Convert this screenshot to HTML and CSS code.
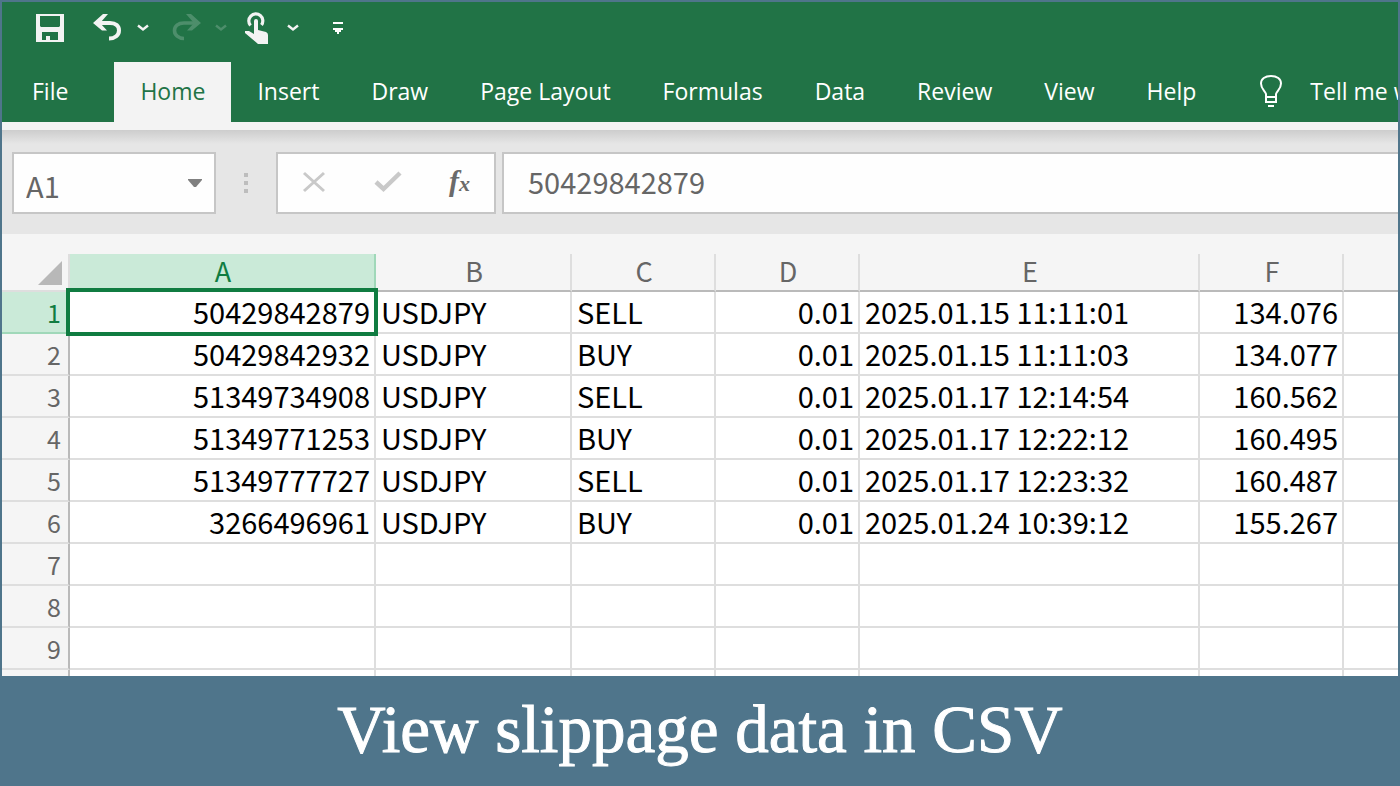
FILE: index.html
```html
<!DOCTYPE html>
<html lang="en">
<head>
<meta charset="utf-8">
<title>View slippage data in CSV</title>
<link rel="stylesheet" href="styles.css">
</head>
<body>
<main class="frame">
  <div class="app">
    <header class="titlebar">
      <div class="quick">
        <button class="tool save" aria-label="Save"><svg width="28" height="28" viewBox="0 0 28 28"><path fill="currentColor" fill-rule="evenodd" d="M0 0h28v28H0zM4 2v10l1 1h18l1-1V2zM6 18v8h4v-4h4v4h8v-8z"/></svg></button>
        <button class="tool undo" aria-label="Undo"><svg width="30" height="28" viewBox="0 0 30 28"><path fill="none" stroke="currentColor" stroke-width="4" d="M3 9h14c6 0 9 3 9 7.500s-4 8-10 8"/><path fill="currentColor" d="M0 9L10 0h5L8 8v2l6 6.500H9z"/></svg></button>
        <button class="tool more" aria-label="Undo history"><svg width="12" height="8" viewBox="0 0 12 8"><path fill="none" stroke="currentColor" stroke-width="2.400" d="M1 1.500l5 4 5-4"/></svg></button>
        <button class="tool redo" aria-label="Redo" disabled><svg width="30" height="28" viewBox="0 0 30 28"><path fill="none" stroke="currentColor" stroke-width="3.600" d="M27 9H13c-6 0-9.500 3-9.500 7.500s4 8 9.500 8"/><path fill="currentColor" d="M30 9L20 0h-5l7 8v2l-6 6.500h5z"/></svg></button>
        <button class="tool more faded" aria-label="Redo history" disabled><svg width="12" height="8" viewBox="0 0 12 8"><path fill="none" stroke="currentColor" stroke-width="2.400" d="M1 1.500l5 4 5-4"/></svg></button>
        <button class="tool touch" aria-label="Touch mode"><svg width="24" height="32" viewBox="0 0 24 32"><path fill="none" stroke="currentColor" stroke-width="3.200" d="M5.500 13.500A7 7 0 1 1 16.500 13"/><path fill="currentColor" d="M9 9q0-2 2-2t2 2v9l8 2q2 1 2 3v9H13L0 21v-2h4l5 3z"/></svg></button>
        <button class="tool more" aria-label="Touch mode options"><svg width="12" height="8" viewBox="0 0 12 8"><path fill="none" stroke="currentColor" stroke-width="2.400" d="M1 1.500l5 4 5-4"/></svg></button>
        <button class="tool customize" aria-label="Customize toolbar"><svg width="10" height="12" viewBox="0 0 10 12"><path fill="currentColor" d="M0 0h10v2H0zM0 6h10v2H8v2H6v2H4v-2H2V8H0z"/></svg></button>
      </div>
      <nav class="tabs">
        <a class="tab file" href="#">File</a>
        <a class="tab active" href="#">Home</a>
        <a class="tab" href="#">Insert</a>
        <a class="tab" href="#">Draw</a>
        <a class="tab" href="#">Page Layout</a>
        <a class="tab" href="#">Formulas</a>
        <a class="tab" href="#">Data</a>
        <a class="tab" href="#">Review</a>
        <a class="tab" href="#">View</a>
        <a class="tab" href="#">Help</a>
        <a class="tab tell" href="#"><svg width="24" height="34" viewBox="0 0 24 34"><path fill="none" stroke="currentColor" stroke-width="2" d="M7 23v-3C6 17 2 15 2 9.500 2 5 6 2 12 2s10 3 10 7.500C22 15 18 17 17 20v3M7 23v5h10v-5zM9 32h6"/></svg>Tell me what you want to do</a>
      </nav>
    </header>
    <div class="ribbon-edge"></div>
    <section class="formula-bar">
      <div class="name-box">
        <input class="name-input" aria-label="Name box" value="A1">
        <button class="name-drop" aria-label="Open name list"><svg width="14" height="8" viewBox="0 0 14 8"><path fill="currentColor" d="M0 0h14v1L8 8H6L0 1z"/></svg></button>
      </div>
      <div class="grip"><i></i><i></i><i></i></div>
      <div class="actions">
        <button class="action" aria-label="Cancel"><svg width="24" height="22" viewBox="0 0 24 22"><path fill="none" stroke="currentColor" stroke-width="3" d="M2 2l20 18M22 2L2 20"/></svg></button>
        <button class="action" aria-label="Enter"><svg width="28" height="22" viewBox="0 0 28 22"><path fill="none" stroke="currentColor" stroke-width="4.500" d="M2 11l7.500 7L26 2"/></svg></button>
        <button class="action fx" aria-label="Insert function">f<small>x</small></button>
      </div>
      <input class="formula-input" aria-label="Formula" value="50429842879">
    </section>
    <section class="sheet">
      <table class="grid">
        <colgroup><col class="c-num"><col class="c-a"><col class="c-b"><col class="c-c"><col class="c-c"><col class="c-e"><col class="c-c"><col></colgroup>
        <thead>
          <tr><th class="corner"><svg width="24" height="24" viewBox="0 0 24 24"><path fill="#b8b8b8" d="M24 0v24H0z"/></svg></th><th class="picked">A</th><th>B</th><th>C</th><th>D</th><th>E</th><th>F</th><th></th></tr>
        </thead>
        <tbody>
          <tr><th class="picked">1</th><td class="num selected">50429842879</td><td>USDJPY</td><td>SELL</td><td class="num">0.01</td><td>2025.01.15 11:11:01</td><td class="num">134.076</td><td></td></tr>
          <tr><th>2</th><td class="num">50429842932</td><td>USDJPY</td><td>BUY</td><td class="num">0.01</td><td>2025.01.15 11:11:03</td><td class="num">134.077</td><td></td></tr>
          <tr><th>3</th><td class="num">51349734908</td><td>USDJPY</td><td>SELL</td><td class="num">0.01</td><td>2025.01.17 12:14:54</td><td class="num">160.562</td><td></td></tr>
          <tr><th>4</th><td class="num">51349771253</td><td>USDJPY</td><td>BUY</td><td class="num">0.01</td><td>2025.01.17 12:22:12</td><td class="num">160.495</td><td></td></tr>
          <tr><th>5</th><td class="num">51349777727</td><td>USDJPY</td><td>SELL</td><td class="num">0.01</td><td>2025.01.17 12:23:32</td><td class="num">160.487</td><td></td></tr>
          <tr><th>6</th><td class="num">3266496961</td><td>USDJPY</td><td>BUY</td><td class="num">0.01</td><td>2025.01.24 10:39:12</td><td class="num">155.267</td><td></td></tr>
          <tr><th>7</th><td></td><td></td><td></td><td></td><td></td><td></td><td></td></tr>
          <tr><th>8</th><td></td><td></td><td></td><td></td><td></td><td></td><td></td></tr>
          <tr><th>9</th><td></td><td></td><td></td><td></td><td></td><td></td><td></td></tr>
          <tr><th></th><td></td><td></td><td></td><td></td><td></td><td></td><td></td></tr>
        </tbody>
      </table>
    </section>
  </div>
  <h1 class="banner">View slippage data in CSV</h1>
</main>
</body>
</html>
```
FILE: styles.css
```css
* { box-sizing: border-box; }
body { margin: 0; font-family: "Open Sans", sans-serif; }
button { border: 0; padding: 0; background: none; color: inherit; font: inherit; display: flex; }
input { min-width: 0; border: 0; padding: 0; background: none; color: #666; font: inherit; outline: 0; }
svg { display: block; flex: none; }

.frame { display: flex; flex-direction: column; height: 100vh; background: #4f758b; overflow: hidden; }
.app { flex: 1; min-height: 0; margin: 2px 2px 0; display: flex; flex-direction: column; background: #f5f5f5; overflow: hidden; }

.titlebar { background: #217346; color: #f3f3f3; }
.quick { display: flex; align-items: center; height: 60px; padding: 0 34px 8px; }
.undo { margin-left: 29px; }
.more { margin-left: 14px; }
.redo { margin-left: 22px; }
.redo, .faded { color: #4d8e6b; }
.touch { margin-left: 18px; }
.touch + .more { margin-left: 18px; }
.customize { margin-left: 34px; color: #fff; }

.tabs { display: flex; height: 60px; white-space: nowrap; overflow: hidden; }
.tab { display: flex; align-items: center; flex: none; padding: 0 26px 2px; color: #fff; font-size: 23px; text-decoration: none; }
.file { padding: 0 46px 2px 30px; }
.active { justify-content: center; min-width: 116px; background: #f3f3f3; color: #217346; }
.tell { gap: 27px; padding-left: 37px; }

.ribbon-edge { height: 8px; background: #f3f3f3; }
.formula-bar { display: flex; align-items: center; height: 104px; padding: 2px 0 0 10px; background: linear-gradient(#cdcdcd, #e6e6e6 14px); font: 29px/54px "Noto Sans CJK JP", sans-serif; }
.name-box, .actions, .formula-input { height: 62px; border: 2px solid #c6c6c6; background: #fefefe; }
.name-box { display: flex; align-items: center; width: 204px; padding: 0 12px; }
.name-input { flex: 1; padding-top: 4px; }
.name-drop { color: #808080; }
.grip { display: flex; flex-direction: column; gap: 4px; width: 60px; align-items: center; }
.grip i { width: 4px; height: 4px; background: #bdbdbd; }
.actions { display: flex; align-items: center; justify-content: space-between; width: 220px; padding: 0 24px 2px; margin-right: 6px; color: #c9c9c9; }
.fx { align-items: baseline; color: #6a6a6a; font: italic bold 30px/40px "Liberation Serif", serif; }
.fx small { font-size: 22px; }
.formula-input { flex: 1; border-right: 0; padding: 0 0 4px 24px; }

.sheet { flex: 1; min-height: 0; padding-top: 20px; overflow: hidden; }
.grid { width: 100%; table-layout: fixed; border-collapse: separate; border-spacing: 0; font: 29px/38px "Noto Sans CJK JP", sans-serif; }
.c-num { width: 68px; }
.c-a { width: 306px; }
.c-b { width: 196px; }
.c-c { width: 144px; }
.c-e { width: 340px; }
.grid td, .grid th { border: 0 solid #dedede; border-width: 0 2px 2px 0; }
.grid td { height: 42px; padding: 0 4px 2px 5px; background: #fff; color: #000; white-space: nowrap; }
.grid th { padding: 0; background: #f5f5f5; color: #666; font-weight: 400; }
.grid thead th { height: 38px; padding: 0 0 2px 2px; font-size: 27px; line-height: 34px; border-bottom-color: #bababa; }
.grid tbody th { padding-right: 7px; font-size: 25px; text-align: right; border-right-color: #bababa; }
.grid th.corner { padding: 2px 0 0; border-color: #dedede; }
.corner svg { margin-left: 36px; }
.grid th.picked { background: #caead8; color: #107c41; border-color: #a0d8b9; }
.grid tr > :last-child { border-right: 0; }
.grid .num { text-align: right; }
.selected { position: relative; }
.selected::after { content: ""; position: absolute; inset: -4px; border: 4px solid #107c41; }

.banner { flex: none; height: 110px; margin: 0; color: #fff; font: 400 67px/106px "Liberation Serif", serif; text-align: center; -webkit-text-stroke: 1px #fff; }
```
